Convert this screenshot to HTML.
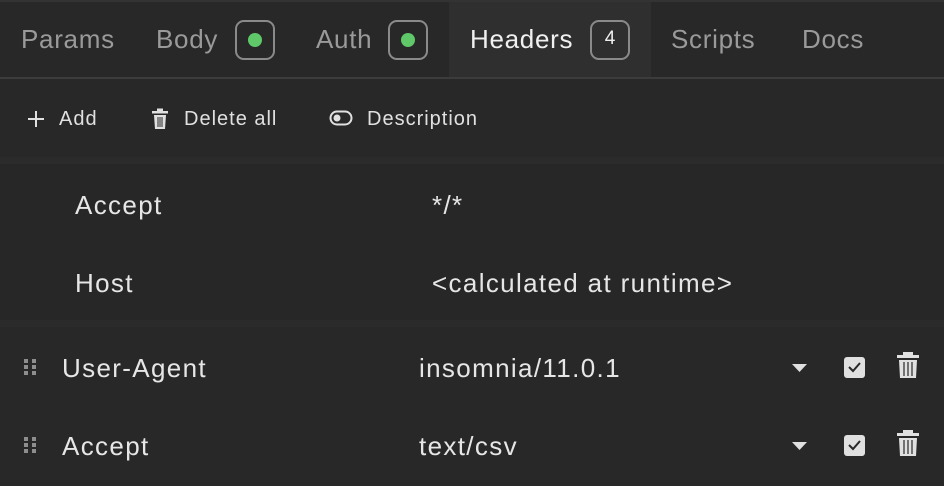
<!DOCTYPE html>
<html><head><style>
body{margin:0;width:944px;height:486px;background:#282828;font-family:"Liberation Sans",sans-serif;overflow:hidden;position:relative;color:#e6e6e6}
.a{position:absolute;white-space:nowrap}
.tab{font-size:26px;letter-spacing:0.7px;color:#9a9a9a;top:24px}
.badge{position:absolute;top:20px;width:36px;height:36px;border:2px solid #8a8a8a;border-radius:9px}
.dot{position:absolute;left:11px;top:11px;width:14px;height:14px;border-radius:50%;background:#5fc96a}
.tb{font-size:20px;letter-spacing:1px;color:#e0e0e0;top:108px}
.row{font-size:26px;letter-spacing:1.35px;color:#e6e6e6}
</style></head><body>
<div class="a" style="left:0;top:0;width:944px;height:2px;background:#333"></div>
<div class="a" style="left:449px;top:2px;width:202px;height:75px;background:#2f2f2f"></div>
<div class="a" style="left:0;top:77px;width:944px;height:2px;background:#3c3c3c"></div>
<div class="a tab" style="left:21px">Params</div>
<div class="a tab" style="left:156px">Body</div>
<div class="badge" style="left:235px"><div class="dot"></div></div>
<div class="a tab" style="left:316px">Auth</div>
<div class="badge" style="left:388px"><div class="dot"></div></div>
<div class="a tab" style="left:470px;color:#f0f0f0">Headers</div>
<div class="badge" style="left:590px"><div class="a" style="left:0;width:36px;text-align:center;top:6px;font-size:19px;color:#eee">4</div></div>
<div class="a tab" style="left:671px">Scripts</div>
<div class="a tab" style="left:802px">Docs</div>

<svg class="a" style="left:26px;top:109px" width="20" height="20"><path d="M10 2v16M2 10h16" stroke="#e0e0e0" stroke-width="2"/></svg>
<div class="a tb" style="left:59px">Add</div>
<svg class="a" style="left:151px;top:108px" width="18" height="22"><rect x="1" y="3" width="16" height="2.5" fill="#e0e0e0"/><rect x="6" y="0.5" width="6" height="3" fill="#e0e0e0"/><path d="M3 7h12l-1 14H4z" fill="#e0e0e0"/><path d="M7 9v10M9 9v10M11 9v10" stroke="#282828" stroke-width="1"/></svg>
<div class="a tb" style="left:184px">Delete all</div>
<svg class="a" style="left:329px;top:110px" width="24" height="16"><rect x="1.5" y="1.5" width="21" height="13" rx="6.5" fill="none" stroke="#e0e0e0" stroke-width="2"/><circle cx="8" cy="8" r="3.5" fill="#e0e0e0"/></svg>
<div class="a tb" style="left:367px">Description</div>

<div class="a" style="left:0;top:157px;width:944px;height:7px;background:#2b2b2b"></div>
<div class="a" style="left:0;top:164px;width:944px;height:156px;background:#272727"></div>
<div class="a" style="left:0;top:320px;width:944px;height:7px;background:#2b2b2b"></div>

<div class="a row" style="left:75px;top:190px">Accept</div>
<div class="a row" style="left:432px;top:190px">*/*</div>
<div class="a row" style="left:75px;top:268px">Host</div>
<div class="a row" style="left:432px;top:268px">&lt;calculated at runtime&gt;</div>

<div class="a row" style="left:62px;top:353px">User-Agent</div>
<div class="a row" style="left:419px;top:353px">insomnia/11.0.1</div>
<div class="a row" style="left:62px;top:431px">Accept</div>
<div class="a row" style="left:419px;top:431px">text/csv</div>

<svg class="a" style="left:0;top:350px" width="944" height="110">
<g fill="#8e8e8e"><rect x="24" y="9" width="4" height="4"/><rect x="32" y="9" width="4" height="4"/><rect x="24" y="15" width="4" height="4"/><rect x="32" y="15" width="4" height="4"/><rect x="24" y="21" width="4" height="4"/><rect x="32" y="21" width="4" height="4"/>
<rect x="24" y="87" width="4" height="4"/><rect x="32" y="87" width="4" height="4"/><rect x="24" y="93" width="4" height="4"/><rect x="32" y="93" width="4" height="4"/><rect x="24" y="99" width="4" height="4"/><rect x="32" y="99" width="4" height="4"/></g>
<g fill="#e0e0e0">
<path d="M792 14h15l-7.5 8z"/><path d="M792 92h15l-7.5 8z"/>
<rect x="844" y="7" width="21" height="21" rx="3"/><rect x="844" y="85" width="21" height="21" rx="3"/>
<path d="M897 5h22v3h-22zM903 2h10v3h-10zM899 10h18l-1 18h-16z"/>
<path d="M897 83h22v3h-22zM903 80h10v3h-10zM899 88h18l-1 18h-16z"/>
</g>
<path d="M849 17l4 4 7-8M849 95l4 4 7-8" stroke="#282828" stroke-width="2" fill="none"/>
<path d="M904 12v14M908 12v14M912 12v14M904 90v14M908 90v14M912 90v14" stroke="#282828" stroke-width="1.2"/>
</svg>
</body></html>
